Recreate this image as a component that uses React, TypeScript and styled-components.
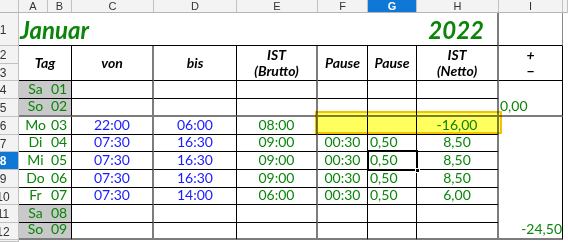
import React from 'react';
import styled, { createGlobalStyle } from 'styled-components';

const Global = createGlobalStyle`
  html, body { margin: 0; padding: 0; background: #fff; }
  body { width: 568px; height: 242px; overflow: hidden; }
`;

const GREEN = '#0a850a';
const BLUE = '#1a1aff';
const BLACK = '1px solid #000';
const THICK = '2px solid #7c7c7c';
const HDR_LINE = '#c2c2c2';
const SEL = '#0f78d6';

const Sheet = styled.div`
  position: relative;
  display: grid;
  grid-template-columns: 19px 29px 24px 82px 83px 81px 50px 49px 82px 64px 5px;
  grid-template-rows: 13px 33px 18px 17px 18px 18px 18px 17px 18px 18px 17px 18px 17px 2px;
  width: 568px;
  height: 242px;
  overflow: hidden;
  font-family: Lato, 'Liberation Sans', sans-serif;
`;

const ColHead = styled.div<{ $sel?: boolean }>`
  grid-row: 1;
  box-sizing: border-box;
  display: flex;
  align-items: center;
  justify-content: center;
  background: ${p => (p.$sel ? SEL : '#f3f3f3')};
  color: ${p => (p.$sel ? '#fff' : '#333')};
  border-right: 1px solid ${HDR_LINE};
  border-bottom: 1px solid #b5b5b5;
  font: ${p => (p.$sel ? 'bold ' : '')}11px 'Liberation Sans', sans-serif;
`;

const RowHead = styled.div<{ $sel?: boolean; $r: number }>`
  grid-column: 1;
  grid-row: ${p => p.$r};
  box-sizing: border-box;
  display: flex;
  align-items: center;
  overflow: hidden;
  background: ${p => (p.$sel ? SEL : '#f3f3f3')};
  color: ${p => (p.$sel ? '#fff' : '#333')};
  border-right: 1px solid ${HDR_LINE};
  border-bottom: 1px solid ${HDR_LINE};
  font: ${p => (p.$sel ? 'bold ' : '')}12px 'Liberation Sans', sans-serif;
`;

const RowNum = styled.span`
  width: 6px;
  display: flex;
  justify-content: center;
  white-space: nowrap;
  padding-top: 1px;
`;

const Cell = styled.div<{
  $c: number;
  $r: number;
  $cs?: number;
  $rs?: number;
  $bg?: string;
  $br?: string;
  $bb?: string;
  $jc?: string;
  $ai?: string;
  $pl?: number;
  $pr?: number;
}>`
  grid-column: ${p => p.$c} / span ${p => p.$cs ?? 1};
  grid-row: ${p => p.$r} / span ${p => p.$rs ?? 1};
  box-sizing: border-box;
  display: flex;
  flex-direction: column;
  justify-content: ${p => p.$ai ?? 'flex-end'};
  align-items: ${p => p.$jc ?? 'center'};
  background: ${p => p.$bg ?? '#fff'};
  border-right: ${p => p.$br ?? 'none'};
  border-bottom: ${p => p.$bb ?? 'none'};
  padding: 0 ${p => p.$pr ?? 0}px 1px ${p => p.$pl ?? 0}px;
  white-space: nowrap;
  overflow: visible;
`;

const TitleRow = styled.div`
  display: flex;
  justify-content: space-between;
  align-items: center;
  align-self: stretch;
  height: 100%;
  padding: 2px 13px 0 1px;
`;

const Title = styled.span`
  font: italic bold 24px Lato, sans-serif;
  color: ${GREEN};
`;

const Head = styled.div`
  font: italic bold 14px Lato, sans-serif;
  color: #000;
  text-align: center;
  line-height: 16px;
`;

const Val = styled.span<{ $color: string }>`
  font: 14px Lato, sans-serif;
  color: ${p => p.$color};
  line-height: 16px;
`;

const Highlight = styled.div`
  position: absolute;
  left: 315px;
  top: 111px;
  width: 187px;
  height: 23px;
  box-sizing: border-box;
  background: #ffff5e;
  border: 2px solid #f2c300;
  mix-blend-mode: multiply;
  pointer-events: none;
`;

const Cursor = styled.div`
  position: absolute;
  left: 367px;
  top: 150px;
  width: 51px;
  height: 21px;
  box-sizing: border-box;
  border: 2px solid #000;
  pointer-events: none;
`;

const Handle = styled.div`
  position: absolute;
  left: 415px;
  top: 168px;
  width: 5px;
  height: 5px;
  background: #000;
  border: 1px solid #fff;
  box-sizing: border-box;
`;

type Day = {
  d: string;
  n: string;
  we?: boolean;
  von?: string;
  bis?: string;
  ist?: string;
  p?: string;
  pd?: string;
  net?: string;
};

const days: Day[] = [
  { d: 'Sa', n: '01', we: true },
  { d: 'So', n: '02', we: true },
  { d: 'Mo', n: '03', von: '22:00', bis: '06:00', ist: '08:00', net: '-16,00' },
  { d: 'Di', n: '04', von: '07:30', bis: '16:30', ist: '09:00', p: '00:30', pd: '0,50', net: '8,50' },
  { d: 'Mi', n: '05', von: '07:30', bis: '16:30', ist: '09:00', p: '00:30', pd: '0,50', net: '8,50' },
  { d: 'Do', n: '06', von: '07:30', bis: '16:30', ist: '09:00', p: '00:30', pd: '0,50', net: '8,50' },
  { d: 'Fr', n: '07', von: '07:30', bis: '14:00', ist: '06:00', p: '00:30', pd: '0,50', net: '6,00' },
  { d: 'Sa', n: '08', we: true },
  { d: 'So', n: '09', we: true },
];

const letters = ['', 'A', 'B', 'C', 'D', 'E', 'F', 'G', 'H', 'I', ''];

export default function App() {
  return (
    <>
      <Global />
      <Sheet>
        {letters.map((l, i) => (
          <ColHead key={i} $sel={l === 'G'}>
            {l}
          </ColHead>
        ))}
        {Array.from({ length: 13 }, (_, i) => (
          <RowHead key={i} $r={i + 2} $sel={i + 1 === 8}>
            <RowNum>{i + 1 <= 12 ? i + 1 : ''}</RowNum>
          </RowHead>
        ))}

        {/* Row 1 */}
        <Cell $c={2} $r={2} $cs={8} $br={THICK} $bb={BLACK} $jc="stretch">
          <TitleRow>
            <Title>Januar</Title>
            <Title>2022</Title>
          </TitleRow>
        </Cell>
        <Cell $c={10} $r={2} $br="1px solid #8a8a8a" $bb={BLACK} />

        {/* Rows 2-3 */}
        <Cell $c={2} $r={3} $cs={2} $rs={2} $br={BLACK} $bb={BLACK} $ai="center">
          <Head>Tag</Head>
        </Cell>
        <Cell $c={4} $r={3} $rs={2} $br={THICK} $bb={BLACK} $ai="center">
          <Head>von</Head>
        </Cell>
        <Cell $c={5} $r={3} $rs={2} $br={BLACK} $bb={BLACK} $ai="center">
          <Head>bis</Head>
        </Cell>
        <Cell $c={6} $r={3} $rs={2} $br={THICK} $bb={BLACK} $ai="center">
          <Head>
            IST
            <br />
            (Brutto)
          </Head>
        </Cell>
        <Cell $c={7} $r={3} $rs={2} $br={BLACK} $bb={BLACK} $ai="center">
          <Head>Pause</Head>
        </Cell>
        <Cell $c={8} $r={3} $rs={2} $br={BLACK} $bb={BLACK} $ai="center">
          <Head>Pause</Head>
        </Cell>
        <Cell $c={9} $r={3} $rs={2} $br={THICK} $bb={BLACK} $ai="center">
          <Head>
            IST
            <br />
            (Netto)
          </Head>
        </Cell>
        <Cell $c={10} $r={3} $rs={2} $br={BLACK} $bb={BLACK} $ai="center">
          <Head>
            +
            <br />−
          </Head>
        </Cell>

        {/* Data rows 4-12 */}
        {days.map((d, i) => {
          const r = i + 5;
          const bb = i === 1 || i === 8 ? THICK : BLACK;
          const bg = d.we ? '#c9c9c9' : '#fff';
          return (
            <React.Fragment key={i}>
              <Cell $c={2} $r={r} $bg={bg} $bb={bb} $pl={4}>
                <Val $color={GREEN}>{d.d}</Val>
              </Cell>
              <Cell $c={3} $r={r} $bg={bg} $bb={bb} $br={BLACK} $pr={1}>
                <Val $color={GREEN}>{d.n}</Val>
              </Cell>
              <Cell $c={4} $r={r} $br={THICK} $bb={bb}>
                {d.von && <Val $color={BLUE}>{d.von}</Val>}
              </Cell>
              <Cell $c={5} $r={r} $br={BLACK} $bb={bb}>
                {d.bis && <Val $color={BLUE}>{d.bis}</Val>}
              </Cell>
              <Cell $c={6} $r={r} $br={THICK} $bb={bb}>
                {d.ist && <Val $color={GREEN}>{d.ist}</Val>}
              </Cell>
              <Cell $c={7} $r={r} $br={BLACK} $bb={bb}>
                {d.p && <Val $color={GREEN}>{d.p}</Val>}
              </Cell>
              <Cell $c={8} $r={r} $br={BLACK} $bb={bb} $jc="flex-start" $pl={2}>
                {d.pd && <Val $color={GREEN}>{d.pd}</Val>}
              </Cell>
              <Cell $c={9} $r={r} $br={THICK} $bb={bb}>
                {d.net && <Val $color={GREEN}>{d.net}</Val>}
              </Cell>
            </React.Fragment>
          );
        })}
        <Cell $c={10} $r={5} $rs={2} $br={BLACK} $bb={THICK} $jc="flex-start" $pl={1}>
          <Val $color={GREEN}>0,00</Val>
        </Cell>
        <Cell $c={10} $r={7} $rs={7} $br={BLACK} $bb={THICK} $jc="flex-end">
          <Val $color={GREEN}>-24,50</Val>
        </Cell>

        <Highlight />
        <Cursor />
        <Handle />
      </Sheet>
    </>
  );
}
